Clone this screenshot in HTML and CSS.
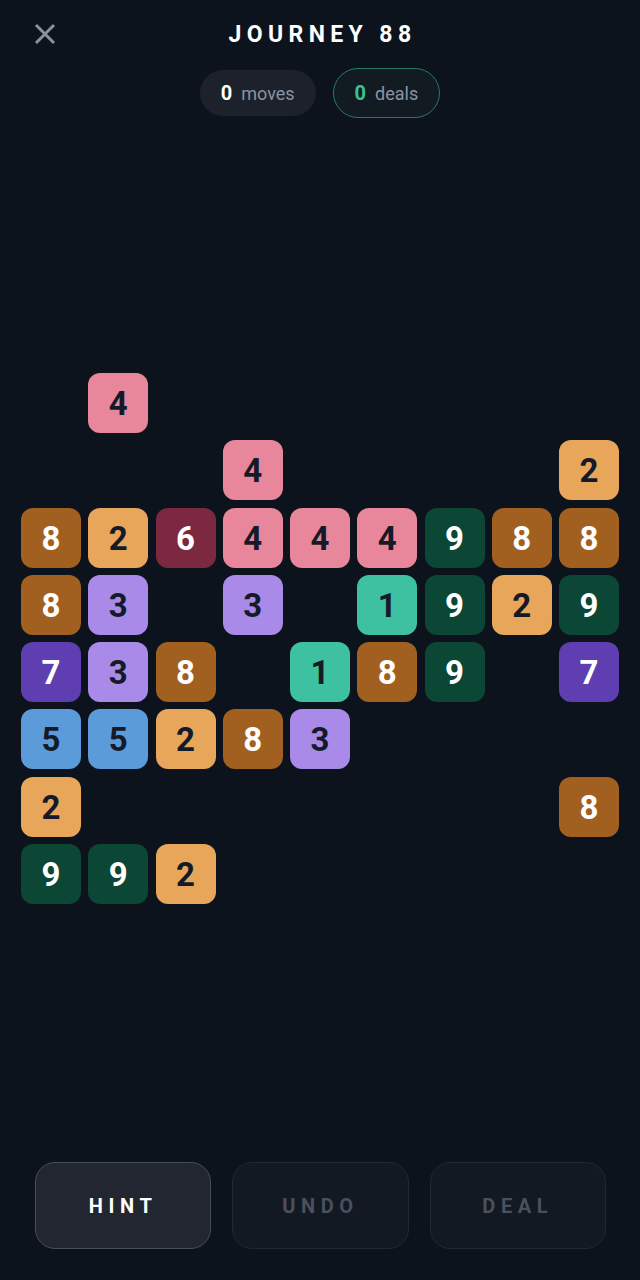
FILE: index.html
```html
<!DOCTYPE html>
<html lang="en">
<head>
<meta charset="utf-8">
<title>Journey 88</title>
<link rel="stylesheet" href="styles.css">
</head>
<body>
<div class="app">
  <header class="topbar">
    <button class="close" aria-label="Close">
      <svg width="24" height="24" viewBox="0 0 24 24"><path d="M3 3 L21 21 M21 3 L3 21" stroke="#8B919D" stroke-width="3" stroke-linecap="butt" fill="none"/></svg>
    </button>
    <h1 class="title">JOURNEY 88</h1>
    <div class="spacer"></div>
  </header>
  <div class="stats">
    <div class="pill"><b class="num">0</b><span class="lbl">moves</span></div>
    <div class="pill pill-deals"><b class="num green">0</b><span class="lbl">deals</span></div>
  </div>
  <main class="board">
    <!-- row 0 -->
    <div class="cell"></div><div class="tile pink">4</div><div class="cell"></div><div class="cell"></div><div class="cell"></div><div class="cell"></div><div class="cell"></div><div class="cell"></div><div class="cell"></div>
    <!-- row 1 -->
    <div class="cell"></div><div class="cell"></div><div class="cell"></div><div class="tile pink">4</div><div class="cell"></div><div class="cell"></div><div class="cell"></div><div class="cell"></div><div class="tile orange">2</div>
    <!-- row 2 -->
    <div class="tile brown">8</div><div class="tile orange">2</div><div class="tile maroon">6</div><div class="tile pink">4</div><div class="tile pink">4</div><div class="tile pink">4</div><div class="tile dkgreen">9</div><div class="tile brown">8</div><div class="tile brown">8</div>
    <!-- row 3 -->
    <div class="tile brown">8</div><div class="tile lav">3</div><div class="cell"></div><div class="tile lav">3</div><div class="cell"></div><div class="tile teal">1</div><div class="tile dkgreen">9</div><div class="tile orange">2</div><div class="tile dkgreen">9</div>
    <!-- row 4 -->
    <div class="tile purple">7</div><div class="tile lav">3</div><div class="tile brown">8</div><div class="cell"></div><div class="tile teal">1</div><div class="tile brown">8</div><div class="tile dkgreen">9</div><div class="cell"></div><div class="tile purple">7</div>
    <!-- row 5 -->
    <div class="tile blue">5</div><div class="tile blue">5</div><div class="tile orange">2</div><div class="tile brown">8</div><div class="tile lav">3</div><div class="cell"></div><div class="cell"></div><div class="cell"></div><div class="cell"></div>
    <!-- row 6 -->
    <div class="tile orange">2</div><div class="cell"></div><div class="cell"></div><div class="cell"></div><div class="cell"></div><div class="cell"></div><div class="cell"></div><div class="cell"></div><div class="tile brown">8</div>
    <!-- row 7 -->
    <div class="tile dkgreen">9</div><div class="tile dkgreen">9</div><div class="tile orange">2</div><div class="cell"></div><div class="cell"></div><div class="cell"></div><div class="cell"></div><div class="cell"></div><div class="cell"></div>
  </main>
  <footer class="controls">
    <button class="btn btn-active">HINT</button>
    <button class="btn btn-off">UNDO</button>
    <button class="btn btn-off">DEAL</button>
  </footer>
</div>
</body>
</html>
```

FILE: styles.css
```css
* { box-sizing: border-box; }
html, body { margin: 0; padding: 0; }
body {
  background: #0D131D;
  font-family: Roboto, "Noto Sans", "Liberation Sans", sans-serif;
  color: #fff;
}
.app {
  width: 640px;
  height: 1280px;
  display: flex;
  flex-direction: column;
}
.topbar {
  height: 68px;
  display: grid;
  grid-template-columns: 90px 1fr 90px;
  align-items: center;
}
.close {
  background: none;
  border: 0;
  padding: 0;
  margin-left: 33px;
  width: 24px;
  height: 24px;
  display: flex;
  cursor: pointer;
}
.title {
  margin: 0;
  text-align: center;
  font-size: 23px;
  font-weight: 700;
  letter-spacing: 5.4px;
  padding-left: 5px;
  color: #fff;
}
.stats {
  height: 50px;
  display: flex;
  justify-content: center;
  align-items: center;
  gap: 17px;
}
.pill {
  height: 46px;
  padding: 0 21px 0 21px;
  border-radius: 23px;
  background: #1C212B;
  display: flex;
  align-items: center;
  gap: 9px;
  font-size: 18px;
}
.pill-deals {
  height: 50px;
  border-radius: 25px;
  background: #121A22;
  border: 1.5px solid #2B7B64;
  padding: 0 21px 0 21px;
}
.num { font-weight: 700; font-size: 20px; color: #fff; }
.num.green { color: #3CC196; }
.lbl { color: #8C93A0; font-weight: 400; }
.board {
  margin-top: 255px;
  display: grid;
  grid-template-columns: repeat(9, 60px);
  grid-auto-rows: 60px;
  column-gap: 7.25px;
  row-gap: 7.25px;
  justify-content: center;
}
.tile {
  border-radius: 12px;
  display: flex;
  align-items: center;
  justify-content: center;
  font-size: 33px;
  font-weight: 700;
  color: #141A28;
  padding-top: 1px;
}
.pink { background: #E8879C; }
.orange { background: #E8A65B; }
.brown { background: #A1601F; color: #fff; }
.maroon { background: #7C2841; color: #fff; }
.dkgreen { background: #0C4635; color: #fff; }
.teal { background: #3EC1A0; }
.lav { background: #A98AE8; }
.purple { background: #5E3EB1; color: #fff; }
.blue { background: #5C9BD9; }
.controls {
  margin-top: auto;
  padding: 0 34px 31px 35px;
  display: flex;
  gap: 21px;
}
.btn {
  flex: 1;
  height: 87px;
  border-radius: 20px;
  font-family: Roboto, "Noto Sans", "Liberation Sans", sans-serif;
  font-size: 20px;
  font-weight: 700;
  letter-spacing: 5.6px;
  padding-left: 6px;
}
.btn-active {
  background: #212631;
  border: 1.5px solid #474D5A;
  color: #fff;
}
.btn-off {
  background: #131923;
  border: 1.5px solid #222833;
  color: #4A505C;
}
```
